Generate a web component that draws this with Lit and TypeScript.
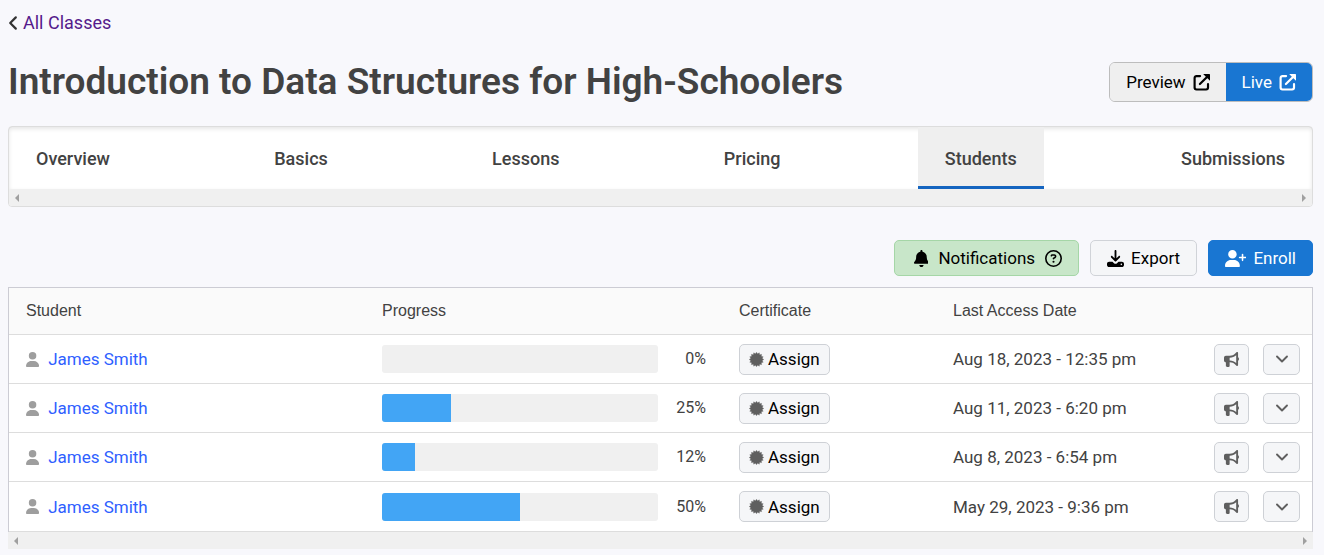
import { LitElement, html, css, svg, nothing } from "lit";
import { customElement, property } from "lit/decorators.js";

type Glyph = { w: number; h: number; body: unknown };

const GLYPHS: Record<string, Glyph> = {
  back: {
    w: 10, h: 16,
    body: svg`<path fill="none" stroke="currentColor" stroke-width="2.200" stroke-linecap="round" stroke-linejoin="round" d="M7.800 2.400 2.200 8l5.600 5.600"/>`,
  },
  external: {
    w: 18, h: 18,
    body: svg`<path fill="none" stroke="currentColor" stroke-width="2.300" stroke-linecap="round" stroke-linejoin="round" d="M7.500 2.200H3.700A2 2 0 0 0 1.700 4.200v10.200a2 2 0 0 0 2 2h10.200a2 2 0 0 0 2-2v-3.600M7.300 10.700l7-7"/><path d="M10.800 0h6.500c.4 0 .7.300.7.700v6.500l-2.200-2.200-3-3z"/>`,
  },
  bell: {
    w: 448, h: 512,
    body: svg`<path d="M224 0c-17.700 0-32 14.300-32 32V51.200C119 66 64 130.600 64 208v18.800c0 47-17.300 92.400-48.500 127.600l-7.400 8.300c-8.400 9.400-10.400 22.900-5.300 34.400S19.400 416 32 416H416c12.600 0 24-7.400 29.200-18.900s3.100-25-5.300-34.400l-7.400-8.300C401.300 319.200 384 273.900 384 226.800V208c0-77.400-55-142-128-156.800V32c0-17.700-14.300-32-32-32zm45.300 493.300c12-12 18.700-28.300 18.700-45.300H224 160c0 17 6.700 33.300 18.700 45.300s28.300 18.700 45.300 18.700s33.300-6.700 45.300-18.700z"/>`,
  },
  question: {
    w: 512, h: 512,
    body: svg`<path d="M464 256A208 208 0 1 0 48 256a208 208 0 1 0 416 0zM0 256a256 256 0 1 1 512 0A256 256 0 1 1 0 256zm169.800-90.700c7.900-22.300 29.100-37.300 52.800-37.300h58.300c34.900 0 63.100 28.300 63.100 63.100c0 22.600-12.100 43.500-31.700 54.800L280 264.400c-.2 13-10.900 23.600-24 23.600c-13.300 0-24-10.700-24-24V250.500c0-8.600 4.600-16.500 12.100-20.800l44.300-25.400c4.700-2.700 7.600-7.700 7.600-13.100c0-8.400-6.800-15.100-15.100-15.100H222.600c-3.400 0-6.400 2.100-7.500 5.300l-.4 1.200c-4.400 12.500-18.200 19-30.600 14.600s-19-18.200-14.600-30.600l.4-1.200zM224 352a32 32 0 1 1 64 0 32 32 0 1 1 -64 0z"/>`,
  },
  download: {
    w: 512, h: 512,
    body: svg`<path d="M284 28c0-15.500-12.500-28-28-28s-28 12.500-28 28V250L163 185c-11-11-29-11-40 0s-11 29 0 40L236 338c11 11 29 11 40 0L389 225c11-11 11-29 0-40s-29-11-40 0L284 250z"/><path fill-rule="evenodd" d="M64 352c-35.300 0-64 28.700-64 64v32c0 35.300 28.700 64 64 64H448c35.300 0 64-28.700 64-64V416c0-35.300-28.700-64-64-64H346.500l-45.300 45.300c-25 25-65.500 25-90.500 0L165.500 352H64zM432 408a24 24 0 1 1 0 48 24 24 0 1 1 0-48z"/>`,
  },
  enroll: {
    w: 640, h: 512,
    body: svg`<path d="M96 128a128 128 0 1 1 256 0A128 128 0 1 1 96 128zM0 482.300C0 383.800 79.800 304 178.300 304h91.400C368.200 304 448 383.800 448 482.300c0 16.400-13.300 29.700-29.700 29.700H29.700C13.300 512 0 498.700 0 482.300zM504 312V248H440c-13.300 0-24-10.700-24-24s10.700-24 24-24h64V136c0-13.300 10.700-24 24-24s24 10.700 24 24v64h64c13.300 0 24 10.700 24 24s-10.700 24-24 24H552v64c0 13.300-10.700 24-24 24s-24-10.700-24-24z"/>`,
  },
  user: {
    w: 448, h: 512,
    body: svg`<path d="M224 256A128 128 0 1 0 224 0a128 128 0 1 0 0 256zm-45.700 48C79.800 304 0 383.800 0 482.300C0 498.700 13.300 512 29.700 512H418.300c16.400 0 29.700-13.300 29.700-29.700C448 383.800 368.200 304 269.700 304H178.300z"/>`,
  },
  seal: {
    w: 512, h: 512,
    body: svg`<polygon points=${burst(16, 256, 198)} stroke="currentColor" stroke-width="8" stroke-linejoin="round"/>`,
  },
  horn: {
    w: 512, h: 512,
    body: svg`<path fill-rule="evenodd" d="M480 32c0-12.900-7.800-24.600-19.800-29.600s-25.700-2.200-34.900 6.900L381.700 53c-48 48-113.100 75-181 75H64c-35.300 0-64 28.700-64 64v96c0 35.300 28.700 64 64 64v128c0 17.700 14.300 32 32 32h64c17.700 0 32-14.300 32-32V352h8.700c67.900 0 133 27 181 75l43.600 43.600c9.200 9.200 22.900 11.900 34.900 6.900s19.800-16.600 19.800-29.600V300.400c18.600-8.800 32-32.500 32-60.400s-13.400-51.600-32-60.400V32zm-64 76.700V371.300C357.200 317.800 280.500 288 200.700 288H192V192h8.700c79.800 0 156.500-29.800 215.300-83.300z"/>`,
  },
  down: {
    w: 14, h: 14,
    body: svg`<path fill="none" stroke="currentColor" stroke-width="1.900" stroke-linecap="round" stroke-linejoin="round" d="M2 4.500 7 9.500l5-5"/>`,
  },
};

function burst(points: number, outer: number, inner: number): string {
  return Array.from({ length: points * 2 }, (_, i) => {
    const r = i % 2 ? inner : outer - 6;
    const a = (Math.PI * i) / points;
    return `${(256 + r * Math.sin(a)).toFixed(1)},${(256 - r * Math.cos(a)).toFixed(1)}`;
  }).join(" ");
}

@customElement("ui-icon")
export class UiIcon extends LitElement {
  @property() name = "";
  static styles = css`
    :host { display: inline-flex; flex: none; height: 16px; }
    svg { display: block; height: 100%; width: auto; fill: currentColor; }
  `;
  render() {
    const g = GLYPHS[this.name];
    return g
      ? html`<svg viewBox="0 0 ${g.w} ${g.h}" aria-hidden="true">${g.body}</svg>`
      : nothing;
  }
}

@customElement("scroll-strip")
export class ScrollStrip extends LitElement {
  static styles = css`
    :host { display: flex; align-items: center; justify-content: space-between; height: 17px; padding: 0 6px; background: #f0f0f0; }
    i { border: 4px solid transparent; }
    .left { border-left-width: 0; border-right-color: #a0a0a0; }
    .right { border-right-width: 0; border-left-color: #a0a0a0; }
  `;
  render() {
    return html`<i class="left"></i><i class="right"></i>`;
  }
}

const TABS = ["Overview", "Basics", "Lessons", "Pricing", "Students", "Submissions"];

const STUDENTS = [
  { name: "James Smith", progress: 0, last: "Aug 18, 2023 - 12:35 pm" },
  { name: "James Smith", progress: 25, last: "Aug 11, 2023 - 6:20 pm" },
  { name: "James Smith", progress: 12, last: "Aug 8, 2023 - 6:54 pm" },
  { name: "James Smith", progress: 50, last: "May 29, 2023 - 9:36 pm" },
];

@customElement("app-root")
export class AppRoot extends LitElement {
  static styles = css`
    :host {
      display: block;
      box-sizing: border-box;
      min-height: 100vh;
      padding: 13px 11px 6px 8px;
      background: #f8f8fc;
      color: #424242;
      font: 400 17px/20px Roboto, sans-serif;
    }
    * { box-sizing: border-box; }
    a { text-decoration: none; }
    button { margin: 0; font: inherit; color: #000; cursor: pointer; }

    .back { display: inline-flex; align-items: center; gap: 5px; font-size: 18px; color: #551a8b; }
    .back ui-icon { color: #333; }

    .heading { display: flex; align-items: center; justify-content: space-between; margin-top: 21px; }
    h1 { margin: 0; font-size: 37px; line-height: 52px; font-weight: 600; color: #424242; }
    .split { display: flex; height: 40px; border: 1px solid #bdbdbd; border-radius: 6px; overflow: hidden; }
    .split a { display: flex; align-items: center; gap: 7px; padding: 0 16px; background: #efefef; color: #000; }
    .split a.live { background: #1976d2; color: #fff; }
    .split ui-icon { height: 17px; }

    .tabs { margin-top: 18px; border: 1px solid #ddd; border-radius: 4px; background: #fff; overflow: hidden; }
    nav { display: flex; justify-content: space-between; box-shadow: inset 0 2px 4px #0000001a; }
    nav a { padding: 22px 27px 17px; border-bottom: 3px solid transparent; font-size: 18px; font-weight: 500; color: #424242; }
    nav a.active { background: #efefef; border-color: #1565c0; }

    .tools { display: flex; justify-content: flex-end; gap: 11px; margin: 33px 0 11px; }
    .tools button { display: flex; align-items: center; gap: 7px; height: 36px; padding: 0 16px; border: 1px solid #d0d3d8; border-radius: 5px; background: #f5f6f8; }
    .tools button.notify { gap: 10px; padding-left: 19px; background: #c8e6c9; border-color: #a5d6a7; }
    .tools button.enroll { background: #1976d2; border-color: #1976d2; color: #fff; }
    .tools ui-icon { height: 17px; }

    table { width: 100%; table-layout: fixed; border-collapse: separate; border-spacing: 0; border: 1px solid #ccccd4; border-bottom: 0; background: #fff; }
    th { height: 46px; padding: 0 17px; background: #fafafa; text-align: left; font: 400 16px/20px "Liberation Sans", Arial, sans-serif; }
    td { height: 49px; padding: 0 17px; border-top: 1px solid #ddd; }
    tbody tr:last-child td { height: 51px; border-bottom: 1px solid #ddd; }
    th:nth-child(1) { width: 356px; }
    th:nth-child(2) { width: 357px; }
    th:nth-child(3) { width: 214px; }
    th:nth-child(5) { width: 132px; }
    .student { display: flex; align-items: center; gap: 9px; }
    .student ui-icon { color: #9e9e9e; height: 15px; }
    .student a { color: #2f5fff; }
    .progress { display: flex; align-items: center; }
    td.bar { padding-right: 16px; }
    .track { flex: 1; height: 28px; border-radius: 3px; background: #f0f0f0; overflow: hidden; }
    .fill { height: 100%; background: #42a5f5; }
    .pct { width: 48px; text-align: right; font-size: 16px; }
    td button { display: flex; align-items: center; justify-content: center; height: 31px; padding: 0; border: 1px solid #ced1d6; border-radius: 5px; background: #f5f6f8; color: #5f5f5f; }
    .assign { gap: 4px; padding: 0 9px; color: #000; }
    .assign ui-icon { color: #5f5f5f; height: 15px; }
    .actions { display: flex; justify-content: flex-end; gap: 14px; }
    td.last { padding: 0 12px 0 0; }
    .horn { width: 35px; }
    .more { width: 37px; }
    .more ui-icon { height: 14px; }
    .horn ui-icon { height: 15px; }
  `;

  render() {
    return html`
      <a class="back" href="#classes"><ui-icon name="back"></ui-icon>All Classes</a>
      <div class="heading">
        <h1>Introduction to Data Structures for High-Schoolers</h1>
        <div class="split">
          <a href="#preview">Preview <ui-icon name="external"></ui-icon></a>
          <a class="live" href="#live">Live <ui-icon name="external"></ui-icon></a>
        </div>
      </div>
      <div class="tabs">
        <nav>
          ${TABS.map((t) => html`<a href="#${t.toLowerCase()}" class=${t === "Students" ? "active" : ""}>${t}</a>`)}
        </nav>
        <scroll-strip></scroll-strip>
      </div>
      <div class="tools">
        <button class="notify"><ui-icon name="bell"></ui-icon>Notifications<ui-icon name="question"></ui-icon></button>
        <button><ui-icon name="download"></ui-icon>Export</button>
        <button class="enroll"><ui-icon name="enroll"></ui-icon>Enroll</button>
      </div>
      <table>
        <thead>
          <tr><th>Student</th><th>Progress</th><th>Certificate</th><th>Last Access Date</th><th aria-label="Actions"></th></tr>
        </thead>
        <tbody>
          ${STUDENTS.map((s) => html`
            <tr>
              <td><div class="student"><ui-icon name="user"></ui-icon><a href="#student">${s.name}</a></div></td>
              <td class="bar">
                <div class="progress">
                  <div class="track"><div class="fill" style="width:${s.progress}%"></div></div>
                  <span class="pct">${s.progress}%</span>
                </div>
              </td>
              <td><button class="assign"><ui-icon name="seal"></ui-icon>Assign</button></td>
              <td>${s.last}</td>
              <td class="last">
                <div class="actions">
                  <button class="horn" aria-label="Announce"><ui-icon name="horn"></ui-icon></button>
                  <button class="more" aria-label="More"><ui-icon name="down"></ui-icon></button>
                </div>
              </td>
            </tr>`)}
        </tbody>
      </table>
      <scroll-strip></scroll-strip>
    `;
  }
}
